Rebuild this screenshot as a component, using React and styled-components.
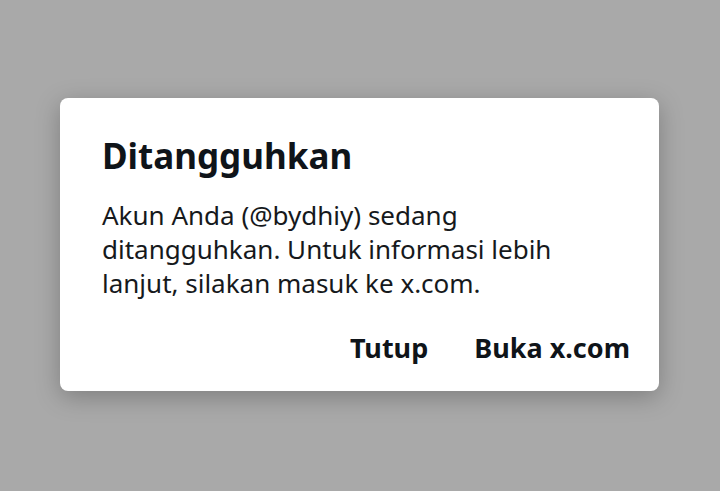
import styled, { createGlobalStyle } from 'styled-components';

const Global = createGlobalStyle`
  html, body {
    margin: 0;
    padding: 0;
    background: #a9a9a9;
  }
  #root {
    height: 491px;
  }
`;

const Backdrop = styled.div`
  height: 491px;
  display: flex;
  align-items: flex-start;
  justify-content: flex-start;
  padding: 98px 0 0 60px;
  box-sizing: border-box;
`;

const Dialog = styled.div`
  width: 599px;
  height: 293px;
  box-sizing: border-box;
  background: #fff;
  border-radius: 8px;
  box-shadow: 0 6px 24px rgba(0, 0, 0, 0.25);
  padding: 36px 29px 0 42px;
  font-family: 'Noto Sans', 'Open Sans', sans-serif;
  color: #0f1419;
  display: flex;
  flex-direction: column;
`;

const Title = styled.h2`
  margin: 0;
  font-size: 35px;
  font-weight: 700;
  line-height: 44px;
`;

const Body = styled.p`
  margin: 20px 13px 0 0;
  font-size: 26px;
  font-weight: 400;
  line-height: 34px;
  color: #16191c;
`;

const Actions = styled.div`
  display: flex;
  justify-content: flex-end;
  gap: 46px;
  margin-top: 31px;
`;

const Action = styled.button`
  border: 0;
  background: none;
  padding: 0;
  font-family: inherit;
  font-size: 27px;
  line-height: 34px;
  font-weight: 700;
  color: #0f1419;
  cursor: pointer;
`;

export default function App() {
  return (
    <>
      <Global />
      <Backdrop>
        <Dialog>
          <Title>Ditangguhkan</Title>
          <Body>
            Akun Anda (@bydhiy) sedang ditangguhkan. Untuk informasi lebih
            lanjut, silakan masuk ke x.com.
          </Body>
          <Actions>
            <Action>Tutup</Action>
            <Action>Buka x.com</Action>
          </Actions>
        </Dialog>
      </Backdrop>
    </>
  );
}
